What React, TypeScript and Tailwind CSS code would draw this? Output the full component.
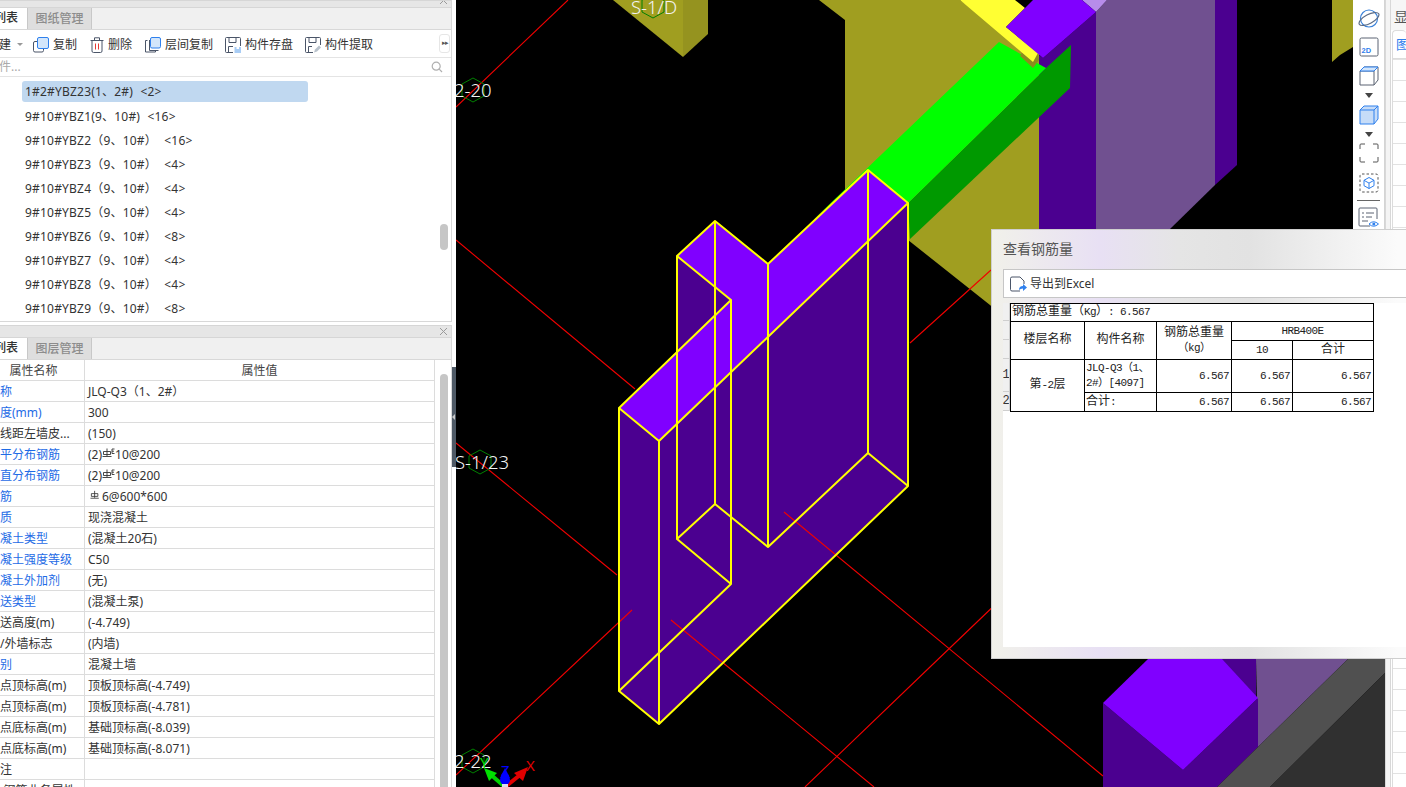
import { ReactNode } from 'react';

const listRows = [
  '9#10#YBZ1(9、10#) <16>',
  '9#10#YBZ2（9、10#） <16>',
  '9#10#YBZ3（9、10#） <4>',
  '9#10#YBZ4（9、10#） <4>',
  '9#10#YBZ5（9、10#） <4>',
  '9#10#YBZ6（9、10#） <8>',
  '9#10#YBZ7（9、10#） <4>',
  '9#10#YBZ8（9、10#） <4>',
  '9#10#YBZ9（9、10#） <8>',
];

const Rebar = ({ e }: { e?: boolean }) => (
  <svg width={e ? 13 : 12} height="10" viewBox="0 0 13 10" className="inline-block -mt-1.5 align-middle" fill="none" stroke="#333" strokeWidth="0.9">
    <path d="M5 0.5V8M1.5 3.5h7v3h-7zM0.5 8.5h9" />
    {e && <path d="M10 1h2.5M10 1v4.5h2.5M10 3.2h2" />}
  </svg>
);

const propRows: { name: string; value: ReactNode; blue?: boolean }[] = [
  { name: '名称', value: 'JLQ-Q3（1、2#）', blue: true },
  { name: '厚度(mm)', value: '300', blue: true },
  { name: '轴线距左墙皮...', value: '(150)' },
  { name: '水平分布钢筋', value: <>(2)<Rebar e />10@200</>, blue: true },
  { name: '垂直分布钢筋', value: <>(2)<Rebar e />10@200</>, blue: true },
  { name: '拉筋', value: <><span className="ml-0.5" /><Rebar />6@600*600</>, blue: true },
  { name: '材质', value: '现浇混凝土', blue: true },
  { name: '混凝土类型', value: '(混凝土20石)', blue: true },
  { name: '混凝土强度等级', value: 'C50', blue: true },
  { name: '混凝土外加剂', value: '(无)', blue: true },
  { name: '泵送类型', value: '(混凝土泵)', blue: true },
  { name: '泵送高度(m)', value: '(-4.749)' },
  { name: '内/外墙标志', value: '(内墙)' },
  { name: '类别', value: '混凝土墙', blue: true },
  { name: '起点顶标高(m)', value: '顶板顶标高(-4.749)' },
  { name: '终点顶标高(m)', value: '顶板顶标高(-4.781)' },
  { name: '起点底标高(m)', value: '基础顶标高(-8.039)' },
  { name: '终点底标高(m)', value: '基础顶标高(-8.071)' },
  { name: '备注', value: '' },
  { name: '     钢筋业务属性', value: '' },
];

const tools = [
  { label: '复制', w: 'w-[57px]', icon: 'copy' },
  { label: '删除', w: 'w-[55px]', icon: 'trash' },
  { label: '层间复制', w: 'w-[80px]', icon: 'floors' },
  { label: '构件存盘', w: 'w-[80px]', icon: 'save' },
  { label: '构件提取', w: 'w-[80px]', icon: 'pick' },
];

function ToolIcon({ name }: { name: string }) {
  if (name === 'copy')
    return (
      <svg width="16" height="16" viewBox="0 0 16 16" fill="none">
        <rect x="0.5" y="4.5" width="10" height="10.5" rx="1.5" stroke="#4a5568" />
        <rect x="4.5" y="0.5" width="11" height="11" rx="1.5" fill="#d3e6fb" stroke="#2f80ed" />
      </svg>
    );
  if (name === 'trash')
    return (
      <svg width="14" height="16" viewBox="0 0 14 16" fill="none" stroke="#4a5568">
        <path d="M0.5 3.5h13M4.5 3V0.8h5V3M2 3.5V14a1.5 1.5 0 0 0 1.5 1.5h7A1.5 1.5 0 0 0 12 14V3.5" />
        <path d="M5.5 6.5v6M8.5 6.5v6" stroke="#e53935" />
      </svg>
    );
  if (name === 'floors')
    return (
      <svg width="16" height="16" viewBox="0 0 16 16" fill="none">
        <path d="M2.5 3.5h-2v11.5h10v-1" stroke="#4a5568" />
        <path d="M4.5 3v10.5h9" stroke="#4a5568" />
        <rect x="5.5" y="0.5" width="10" height="10.5" rx="1.5" fill="#d3e6fb" stroke="#2f80ed" />
      </svg>
    );
  if (name === 'save')
    return (
      <svg width="16" height="16" viewBox="0 0 16 16" fill="none">
        <path d="M8 15.5H1.5a1 1 0 0 1-1-1V1.500a1 1 0 0 1 1-1h13a1 1 0 0 1 1 1V9" stroke="#4a5568" />
        <path d="M4 1v4.500h7V1M3.500 15V9.500H8" stroke="#4a5568" />
        <rect x="9.500" y="10" width="6.500" height="6" fill="#a9cdf5" />
        <rect x="11.500" y="10" width="2.500" height="2" fill="#fff" />
      </svg>
    );
  return (
    <svg width="16" height="16" viewBox="0 0 16 16" fill="none">
      <path d="M8 15.500H1.500a1 1 0 0 1-1-1V1.500a1 1 0 0 1 1-1h13a1 1 0 0 1 1 1V8" stroke="#4a5568" />
      <path d="M4 1v4.500h7V1M3.500 15V9.500H7" stroke="#4a5568" />
      <path d="M9 15.500l1-3 4-4 2 2-4 4z" fill="#b9c2cc" />
    </svg>
  );
}

function PanelHead({ cut, tab, strip, closeTop }: { cut: string; tab: string; strip: string; closeTop: string }) {
  return (
    <>
      <div className={`${strip} shrink-0 bg-[#e6e6e6] border-y border-[#d6d6d6] relative overflow-hidden`}>
        <svg className={`absolute left-[439px] ${closeTop}`} width="9" height="9" viewBox="0 0 9 9" stroke="#9a9a9a">
          <path d="M1 1l7 7M8 1L1 8" />
        </svg>
      </div>
      <div className="h-[22px] shrink-0 flex items-end bg-[#f0f0f0] border-b border-[#d8d8d8] text-[12px] leading-[21px]">
        <div className="w-[27px] h-[22px] bg-white overflow-hidden whitespace-nowrap text-[#333]">
          <span className="inline-block -ml-[30px] font-medium">{cut}</span>
        </div>
        <div className="w-[65px] h-[22px] bg-[#dedede] border border-[#c8c8c8] border-b-0 text-[#8c8c8c] text-center font-medium">{tab}</div>
      </div>
    </>
  );
}

const p = (pts: number[][]) => pts.map(q => q.join(',')).join(' ');

const topPts = [[619, 408], [731, 300], [677, 256], [715, 221], [768, 264], [868, 170], [908, 203], [659, 441]];
const botPts = [[619, 691], [731, 584], [677, 539], [715, 504], [768, 547], [868, 453], [908, 486], [659, 724]];

function Scene() {
  return (
    <svg className="absolute left-0 top-0" width="929" height="787" viewBox="456 0 929 787">
      {/* olive walls */}
      <polygon points="613,0 683,57 683,0" fill="#a09e20" />
      <polygon points="683,0 683,57 708,34 708,0" fill="#95931f" />
      <polygon points="819,0 960,0 1039,53 1039,350 990,305 845,190 845,20" fill="#a09e20" />
      <polygon points="1332,0 1353,0 1353,47 1340,55 1332,62" fill="#a09e20" />

      {/* purple columns */}
      <polygon points="1039,55 1043,58 1096,12 1096,300 1039,300" fill="#4b0090" />
      <polygon points="1096,12 1107,0 1215,0 1215,185 1170,229 1096,300" fill="#705090" />
      <polygon points="1215,0 1237,0 1237,165 1215,185" fill="#4b0090" />
      <polygon points="1082,0 1107,0 1096,12" fill="#b78cea" />

      {/* green beam */}
      <polygon points="1046,68 1071,45 1070,88 910,239 908,203" fill="#009900" />
      <polygon points="999,42 1046,68 908,203 868,170 813,220" fill="#00ff00" />

      {/* yellow beam and top of the column */}
      <polygon points="1026,45 1038,53 1039,60 1033,68 1020,56" fill="#8c8a1e" />
      <polygon points="960,0 1015,0 1025,8 1006,27 1038,53 1033,62" fill="#ffff33" />
      <polygon points="1006,27 1033,0 1082,0 1096,12 1043,58" fill="#8000ff" />

      {/* lower right */}
      <polygon points="1256,659 1348,659 1258,747" fill="#705090" />
      <polygon points="1218,663 1222,659 1256,659 1256,697" fill="#4b0090" />
      <polygon points="1103,703 1183,770 1258,698 1258,747 1217,787 1103,787" fill="#4b0090" />
      <polygon points="1103,703 1148,659 1222,659 1258,698 1183,770" fill="#8000ff" />
      <polygon points="1348,659 1385,659 1385,673 1270,787 1217,787 1258,747" fill="#505050" />
      <polygon points="1385,673 1385,787 1270,787" fill="#303030" />

      {/* axis lines behind the wall */}
      <g stroke="#f00000" strokeWidth="1.1" fill="none">
        <path d="M456 107L568 0M456 240L635 389M456 443L617 575M910 343L991 270" />
        <path d="M805 787L930 667L1000 600" />
      </g>

      {/* the selected wall */}
      <g fill="#4b0090">
        {topPts.map((a, i) => {
          const n = (i + 1) % 8;
          return <polygon key={i} points={p([a, topPts[n], botPts[n], botPts[i]])} />;
        })}
        <polygon points={p(botPts)} />
        <polygon points={p(topPts)} />
      </g>
      <polygon points={p(topPts)} fill="#8000ff" />

      <g stroke="#f00000" strokeWidth="1.1" fill="none">
        <path d="M456 775L632 610M671 620L874 787M784 512L1103 776" />
      </g>

      <g stroke="#ffff00" strokeWidth="2" fill="none" strokeLinejoin="round">
        <polygon points={p(topPts)} />
        <polygon points={p(botPts)} />
        {topPts.map((a, i) => (
          <line key={i} x1={a[0]} y1={a[1]} x2={botPts[i][0]} y2={botPts[i][1]} />
        ))}
      </g>

      {/* grid bubbles */}
      <g stroke="#008000" strokeWidth="1" fill="none">
        <polygon points="473,78 484,84 484,96 473,102 462,96 462,84" />
        <polygon points="653,-6 664,0 664,12 653,18 642,12 642,0" />
        <polygon points="480,450 491,456 491,468 480,474 469,468 469,456" />
        <polygon points="473,749 484,755 484,767 473,773 462,767 462,755" />
      </g>

      {/* axis gizmo */}
      <path d="M505 787L490 774" stroke="#00d000" strokeWidth="4" />
      <polygon points="484,768 497,773 489,781" fill="#00e000" />
      <path d="M505 787L520 775" stroke="#e00000" strokeWidth="4" />
      <polygon points="528,767 523,781 514,773" fill="#e00000" />
      <circle cx="505" cy="780" r="5" fill="#0000ff" />
      <polygon points="505,768 510,778 500,778" fill="#0000ff" />
      <rect x="502" y="784" width="6" height="3" fill="#dde" />
    </svg>
  );
}

function CanvasLabel({ text, x }: { text: string; x: string }) {
  return <span className={`absolute ${x} text-[18.5px] leading-[20px] text-[#f4f4f4] whitespace-nowrap font-['Noto_Sans'] font-light`}>{text}</span>;
}

function SideTools() {
  return (
    <div className="absolute left-[897px] top-0 w-[32px] h-[232px] bg-white border-r-[1px] border-[#d4d4d4] flex flex-col items-center pt-[8px]">
      <svg width="22" height="21" viewBox="0 0 22 21" fill="none" stroke="#3b82d8" strokeWidth="1.2">
        <circle cx="11" cy="10.500" r="8.500" />
        <ellipse cx="11" cy="11" rx="11" ry="4.500" transform="rotate(-28 11 11)" stroke="#5b6b85" />
      </svg>
      <svg className="mt-[8px]" width="20" height="20" viewBox="0 0 20 20" fill="none">
        <rect x="1" y="1" width="18" height="18" rx="1.500" stroke="#5a6372" />
        <text x="2.500" y="16" fontSize="7.500" fontWeight="700" fill="#2f80ed" fontFamily="Liberation Sans, sans-serif">2D</text>
      </svg>
      <svg className="mt-[9px]" width="20" height="20" viewBox="0 0 20 20" fill="none">
        <path d="M5 1h14v13l-4 5H1V5z" stroke="#5a6372" fill="none" />
        <path d="M1 5h14v14M15 5l4-4" stroke="#5a6372" />
        <path d="M1 5l4-4h14l-4 4z" fill="#d3e6fb" stroke="#2f80ed" />
      </svg>
      <div className="mt-[7px] w-0 h-0 border-x-[4px] border-x-transparent border-t-[5px] border-t-[#444]" />
      <svg className="mt-[7px]" width="20" height="20" viewBox="0 0 20 20" fill="#c6dcf8" stroke="#2f80ed">
        <path d="M5 1h14v13l-4 5H1V5z" />
        <path d="M1 5h14v14M15 5l4-4" fill="none" />
      </svg>
      <div className="mt-[7px] w-0 h-0 border-x-[4px] border-x-transparent border-t-[5px] border-t-[#444]" />
      <svg className="mt-[6px]" width="20" height="20" viewBox="0 0 20 20" fill="none" stroke="#555">
        <path d="M1 6V2a1 1 0 0 1 1-1h4M14 1h4a1 1 0 0 1 1 1v4M19 14v4a1 1 0 0 1-1 1h-4M6 19H2a1 1 0 0 1-1-1v-4" />
      </svg>
      <svg className="mt-[10px]" width="20" height="20" viewBox="0 0 20 20" fill="none">
        <rect x="1" y="1" width="18" height="18" rx="2" stroke="#555" strokeDasharray="2.500 2" />
        <path d="M10 4.500l5 2.800v5.400l-5 2.800-5-2.800V7.300zM5 7.300l5 2.800 5-2.800M10 10.100v5.400" stroke="#2f80ed" />
      </svg>
      <div className="mt-[7px] w-[23px] h-px bg-[#666]" />
      <svg className="mt-[6px]" width="21" height="21" viewBox="0 0 21 21" fill="none">
        <path d="M12 19H2a1 1 0 0 1-1-1V2a1 1 0 0 1 1-1h16a1 1 0 0 1 1 1v10" stroke="#5a6372" />
        <path d="M4 6h2M8 6h8M4 10h2M8 10h6M4 14h6" stroke="#5a6372" />
        <path d="M11 17q4.500-4.500 9.500 0q-5 4.500-9.500 0z" stroke="#2f80ed" fill="#fff" />
        <circle cx="15.800" cy="17" r="1.500" fill="#2f80ed" />
      </svg>
    </div>
  );
}

const cell = 'border border-black p-0 font-normal';
const mono = 'text-[11px] tracking-[-0.6px]';

function Dialog() {
  return (
    <div className="absolute left-[991px] top-[229px] w-[415px] h-[430px] border border-[#cfcfcf] border-r-0 bg-[linear-gradient(90deg,#f1f1ea_0%,#e8e0f4_26%,#e5e5e5_45%,#e2e2e2_62%,#fbfbfb_98%)] flex flex-col pl-[11px] pb-[11px]">
      <div className="h-[39px] shrink-0 flex items-center pb-[2px] text-[14px] text-[#555] font-['Noto_Sans','Noto_Sans_CJK_SC',sans-serif]">查看钢筋量</div>
      <div className="h-[29px] shrink-0 bg-white border border-[#c6c6c6] border-r-0 flex items-center pl-[6px] gap-[3px] text-[12px] text-[#333] font-['Noto_Sans','Noto_Sans_CJK_SC',sans-serif]">
        <svg width="17" height="16" viewBox="0 0 17 16" fill="none">
          <path d="M10 15H2a1.500 1.500 0 0 1-1.500-1.500v-11A1.500 1.500 0 0 1 2 1h8l4 4v3" stroke="#4a5568" />
          <path d="M9 14q0-4 4-4V8l4 3.500L13 15v-2.500q-2.500 0-4 1.500z" fill="#2f80ed" />
        </svg>
        <span>导出到Excel</span>
      </div>
      <div className="flex-1 mt-[5px] bg-white flex items-start overflow-hidden">
        <div className="w-[7px] shrink-0 flex flex-col text-[12px] text-[#333] font-['Liberation_Mono',monospace]">
          {[18, 19, 19, 33, 19].map((h, i) => (
            <div key={i} style={{ height: h }} className="bg-[#f0f0f0] border-b border-r border-[#cfcfcf] overflow-hidden flex items-center justify-center leading-none">
              {i > 2 ? i - 2 : ''}
            </div>
          ))}
        </div>
        <table className="table-fixed border-collapse w-[363px] text-[#222] text-[12px] leading-[15px] font-['Liberation_Mono','Noto_Sans_CJK_SC',monospace]">
          <colgroup>
            <col className="w-[74px]" />
            <col className="w-[72px]" />
            <col className="w-[75px]" />
            <col className="w-[61px]" />
            <col className="w-[81px]" />
          </colgroup>
          <tbody>
            <tr className="h-[18px]">
              <td colSpan={5} className={`${cell} pl-[1px] whitespace-nowrap`}>钢筋总重量（<span className={mono}>Kg</span>）<span className={mono}>: 6.567</span></td>
            </tr>
            <tr className="h-[19px]">
              <td rowSpan={2} className={`${cell} text-center`}>楼层名称</td>
              <td rowSpan={2} className={`${cell} text-center`}>构件名称</td>
              <td rowSpan={2} className={`${cell} text-center`}>钢筋总重量<br /><span className={mono}>（kg）</span></td>
              <td colSpan={2} className={`${cell} text-center ${mono}`}>HRB400E</td>
            </tr>
            <tr className="h-[19px]">
              <td className={`${cell} text-center ${mono}`}>10</td>
              <td className={`${cell} text-center`}>合计</td>
            </tr>
            <tr className="h-[33px]">
              <td rowSpan={2} className={`${cell} text-center`}>第<span className={mono}>-2</span>层</td>
              <td className={`${cell} pl-[1px] ${mono} leading-[15px]`}>JLQ-Q3（1、<br />2#）[4097]</td>
              <td className={`${cell} text-right pr-[2px] ${mono}`}>6.567</td>
              <td className={`${cell} text-right pr-[2px] ${mono}`}>6.567</td>
              <td className={`${cell} text-right pr-[2px] ${mono}`}>6.567</td>
            </tr>
            <tr className="h-[19px]">
              <td className={`${cell} pl-[1px]`}>合计<span className={mono}>:</span></td>
              <td className={`${cell} text-right pr-[2px] ${mono}`}>6.567</td>
              <td className={`${cell} text-right pr-[2px] ${mono}`}>6.567</td>
              <td className={`${cell} text-right pr-[2px] ${mono}`}>6.567</td>
            </tr>
          </tbody>
        </table>
      </div>
    </div>
  );
}

export default function App() {
  return (
    <div className="relative w-[1406px] h-[787px] overflow-hidden flex bg-white text-[12px] text-[#333] font-['Noto_Sans','Noto_Sans_CJK_SC',sans-serif]">
      {/* left panels */}
      <div className="w-[456px] shrink-0 flex flex-col pr-[4px] relative">
        <div className="h-[322px] shrink-0 flex flex-col border-r border-b border-[#d8d8d8] overflow-hidden">
          <PanelHead cut="构件列表" tab="图纸管理" strip="h-[8px]" closeTop="-top-[5px]" />
          <div className="h-[28px] shrink-0 flex items-center pt-[2px] border-b border-[#e4e4e4] relative">
            <div className="w-[33px] shrink-0 overflow-hidden whitespace-nowrap flex items-center">
              <span className="-ml-[13px]">新建</span>
              <span className="ml-[6px] w-0 h-0 border-x-[3px] border-x-transparent border-t-[3px] border-t-[#999]" />
            </div>
            {tools.map(t => (
              <div key={t.label} className={`${t.w} shrink-0 flex items-center gap-[4px]`}>
                <ToolIcon name={t.icon} />
                <span className="whitespace-nowrap">{t.label}</span>
              </div>
            ))}
            <div className="absolute left-[439px] top-[4px] w-[11px] h-[19px] border border-[#e6e6e6] rounded-[3px] flex items-center justify-center text-[7px] text-[#555] tracking-[-1px]">▸▸</div>
          </div>
          <div className="h-[19px] shrink-0 flex items-center justify-between border-b border-[#e4e4e4] pr-[8px] text-[#aaa]">
            <span className="whitespace-nowrap -ml-[37px]">搜索构件...</span>
            <svg width="12" height="12" viewBox="0 0 12 12" fill="none" stroke="#b0b0b0" strokeWidth="1.200">
              <circle cx="5.200" cy="5.200" r="4" />
              <path d="M8.200 8.200L11 11" />
            </svg>
          </div>
          <div className="flex-1 relative pt-[4px] pl-[22px] overflow-hidden tracking-[0.2px] [word-spacing:4px]">
            <div className="w-[286px] h-[21px] bg-[#c0d8f0] rounded-[3px] pl-[3px] leading-[21px] whitespace-pre">1#2#YBZ23(1、2#) &lt;2&gt;</div>
            <div className="mt-[2px]">
              {listRows.map(r => (
                <div key={r} className="h-[24px] pl-[3px] leading-[24px] pt-[1px] whitespace-pre">{r}</div>
              ))}
            </div>
            <div className="absolute left-[440px] top-[147px] w-[8px] h-[26px] rounded-full bg-[#c6c6c6]" />
          </div>
        </div>
        <div className="h-[3px] shrink-0" />
        <div className="flex-1 min-h-0 flex flex-col border-r border-[#d8d8d8] overflow-hidden">
          <PanelHead cut="构件列表" tab="图层管理" strip="h-[13px]" closeTop="top-[1px]" />
          <div className="flex-1 min-h-0 flex relative overflow-hidden">
            <div className="w-[435px] shrink-0">
              <div className="h-[21px] flex border-b border-[#dcdcdc] border-r leading-[21px] text-[#444]">
                <div className="w-[85px] shrink-0 border-r border-[#dcdcdc] text-center pr-[17px]">属性名称</div>
                <div className="flex-1 text-center">属性值</div>
              </div>
              {propRows.map(r => (
                <div key={r.name} className="h-[21px] flex border-b border-r border-[#dcdcdc] leading-[22px]">
                  <div className={`w-[85px] shrink-0 border-r border-[#dcdcdc] overflow-hidden whitespace-pre ${r.blue ? 'text-[#1e6be6]' : 'text-[#333]'}`}>
                    <span className="inline-block -ml-[12px]">{r.name}</span>
                  </div>
                  <div className="flex-1 pl-[3px] whitespace-nowrap text-[#333]">{r.value}</div>
                </div>
              ))}
            </div>
            <div className="flex-1 relative">
              <div className="absolute left-[5px] top-[14px] bottom-0 w-[8px] rounded-t-full bg-[#c6c6c6]" />
            </div>
          </div>
        </div>
        {/* splitter handle */}
        <div className="absolute left-[452px] top-[367px] w-[4px] h-[100px] bg-[#4f5a66] flex items-center">
          <div className="w-0 h-0 border-y-[3px] border-y-transparent border-r-[3px] border-r-[#c8c8c8]" />
        </div>
      </div>

      {/* 3d view */}
      <div className="w-[929px] shrink-0 relative bg-black overflow-hidden font-['Noto_Sans',sans-serif]">
        <Scene />
        <CanvasLabel text="S-1/D" x="left-[175px] -top-[3px]" />
        <CanvasLabel text="2-20" x="-left-[2px] top-[80px]" />
        <CanvasLabel text="S-1/23" x="-left-[1px] top-[452px]" />
        <CanvasLabel text="2-22" x="-left-[2px] top-[751px]" />
        <span className="absolute left-[24px] top-[752px] text-[15px] leading-[20px] text-[#00e000]">Y</span>
        <span className="absolute left-[45px] top-[760px] text-[15px] leading-[20px] text-[#0000ff]">Z</span>
        <span className="absolute left-[70px] top-[755px] text-[15px] leading-[20px] text-[#e00000]">X</span>
        <SideTools />
      </div>

      {/* right dock */}
      <div className="flex-1 min-w-0 border-l border-[#d8d8d8] pl-[4px] bg-[#f4f4f4] flex flex-col overflow-hidden">
        <div className="h-[30px] shrink-0 text-[#555] text-[14px] leading-[34px] whitespace-nowrap border-l border-[#d8d8d8] pl-[3px] bg-[#f6f6f6]">显示</div>
        <div className="flex-1 border-l border-[#d8d8d8] bg-white pl-[1px]">
          <div className="h-[29px] border border-[#dcdcdc] rounded-t-[4px] border-r-0 pl-[3px] text-[#2f80ed] text-[13px] leading-[26px] whitespace-nowrap">图层</div>
          <div className="border-l border-[#dcdcdc] bg-[repeating-linear-gradient(180deg,#e2e2e2_0,#e2e2e2_1px,transparent_1px,transparent_21px)] h-[728px]" />
        </div>
      </div>

      <Dialog />
    </div>
  );
}
